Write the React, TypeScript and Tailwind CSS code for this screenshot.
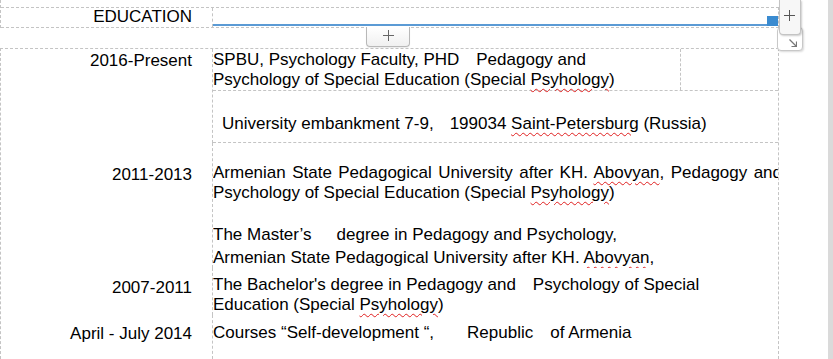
import React from "react";

const D = "border-dashed border-[#c4c4c4]";
const spell =
  "underline decoration-wavy decoration-[#e02020] decoration-1 underline-offset-[3px]";

function Gap({ w }: { w: number }) {
  return <span className="inline-block" style={{ width: w }} />;
}

export default function App() {
  return (
    <div className="flex h-[359px] w-[833px] overflow-hidden bg-white text-[17px] leading-[20px] text-black font-['Liberation_Sans',Arial,sans-serif]">
      <div className="relative w-[828px]">
        {/* header row */}
        <div className={`w-[779px] border-l ${D} pt-[7px]`}>
          <div className={`flex h-[21px] border-y border-r ${D}`}>
            <div className={`w-[212px] border-r ${D} pr-[20px] text-right leading-[18px]`}>
              EDUCATION
            </div>
            <div className="relative flex-1">
              <div className="absolute bottom-[1px] left-0 right-0 h-[2px] bg-[#5b9bd5]" />
              <div className="absolute bottom-[1px] right-0 h-[10px] w-[11px] bg-[#3a8bd0]" />
            </div>
          </div>
        </div>

        {/* main table */}
        <div className={`mt-[20px] flex h-[311px] w-[779px] flex-col border-x border-t ${D}`}>
          {/* row 1 */}
          <div className="flex">
            <div className={`w-[212px] shrink-0 border-r ${D} pr-[20px] pt-[2px] text-right`}>
              2016-Present
            </div>
            <div className="flex flex-1 flex-col">
              <div className={`flex h-[42px] border-b ${D}`}>
                <div className={`w-[468px] border-r ${D} pt-[1px] leading-[19.5px] whitespace-nowrap`}>
                  <div>
                    SPBU, Psychology Faculty, PHD
                    <Gap w={17} />
                    Pedagogy and
                  </div>
                  <div>
                    Psychology of Special Education (Special <span className={spell}>Psyhology</span>)
                  </div>
                </div>
                <div className="flex-1" />
              </div>
              <div className={`h-[52px] border-b ${D} pl-[9px] pt-[23px] whitespace-nowrap`}>
                University embankment 7-9,
                <Gap w={16} />
                199034 <span className={spell}>Saint-Petersburg</span> (Russia)
              </div>
            </div>
          </div>

          {/* row 2 */}
          <div className="flex">
            <div className={`w-[212px] shrink-0 border-r ${D} pr-[20px] pt-[22px] text-right`}>
              2011-2013
            </div>
            <div className="flex-1 overflow-hidden pt-[20px] whitespace-nowrap">
              <div className="w-[569px] text-justify [text-align-last:justify]">
                Armenian State Pedagogical University after KH. <span className={spell}>Abovyan</span>, Pedagogy and
              </div>
              <div>
                Psychology of Special Education (Special <span className={spell}>Psyhology</span>)
              </div>
              <div className="mt-[22px]">
                The Master’s
                <Gap w={25} />
                degree in Pedagogy and Psychology,
              </div>
              <div className="mt-[3px]">
                Armenian State Pedagogical University after KH. <span className={spell}>Abovyan</span>,
              </div>
            </div>
          </div>

          {/* row 3 */}
          <div className="flex">
            <div className={`w-[212px] shrink-0 border-r ${D} pr-[20px] pt-[10px] text-right`}>
              2007-2011
            </div>
            <div className="flex-1 pt-[7px] whitespace-nowrap">
              <div>
                The Bachelor's degree in Pedagogy and
                <Gap w={17} />
                Psychology of Special
              </div>
              <div>
                Education (Special <span className={spell}>Psyhology</span>)
              </div>
            </div>
          </div>

          {/* row 4 */}
          <div className="flex flex-1">
            <div className={`w-[212px] shrink-0 border-r ${D} pr-[20px] pt-[9px] text-right`}>
              April - July 2014
            </div>
            <div className="flex-1 pt-[8px] whitespace-nowrap">
              Courses “Self-development “,
              <Gap w={33} />
              Republic
              <Gap w={17} />
              of Armenia
            </div>
          </div>
        </div>

        {/* overlay: add-row button */}
        <div className="absolute left-[366px] top-[27px] h-[20px] w-[44px] rounded-b-[4px] border border-t-0 border-[#b8b8b8] bg-gradient-to-b from-white to-[#f0f0f0] shadow-[0_1px_1px_rgba(0,0,0,0.08)]">
          <svg className="absolute left-[16px] top-[3px]" width="11" height="11" viewBox="0 0 11 11">
            <path d="M5.5 0v11M0 5.5h11" stroke="#666" strokeWidth="1" />
          </svg>
        </div>

        {/* overlay: resize handle */}
        <div className="absolute left-[777px] top-[27px] h-[24px] w-[26px] rounded-[4px] border border-[#c8c8c8] bg-white shadow-[1px_1px_2px_rgba(0,0,0,0.15)]">
          <svg className="absolute left-[11px] top-[11px]" width="8" height="8" viewBox="0 0 8 8">
            <path d="M0.5 0.5L7 7" stroke="#777" strokeWidth="1.2" />
            <path d="M7.5 2.5V7.5H2.5" fill="none" stroke="#777" strokeWidth="1.2" />
          </svg>
        </div>

        {/* overlay: add-column button */}
        <div className="absolute left-[779px] top-0 h-[35px] w-[22px] rounded-b-[4px] border border-t-0 border-[#c4c4c4] bg-[#f7f7f7] shadow-[1px_1px_2px_rgba(0,0,0,0.2)]">
          <svg className="absolute left-[4px] top-[10px]" width="11" height="11" viewBox="0 0 11 11">
            <path d="M5.5 0v11M0 5.5h11" stroke="#555" strokeWidth="1" />
          </svg>
        </div>
      </div>
      <div className="w-[5px] bg-[#dadada]" />
    </div>
  );
}
